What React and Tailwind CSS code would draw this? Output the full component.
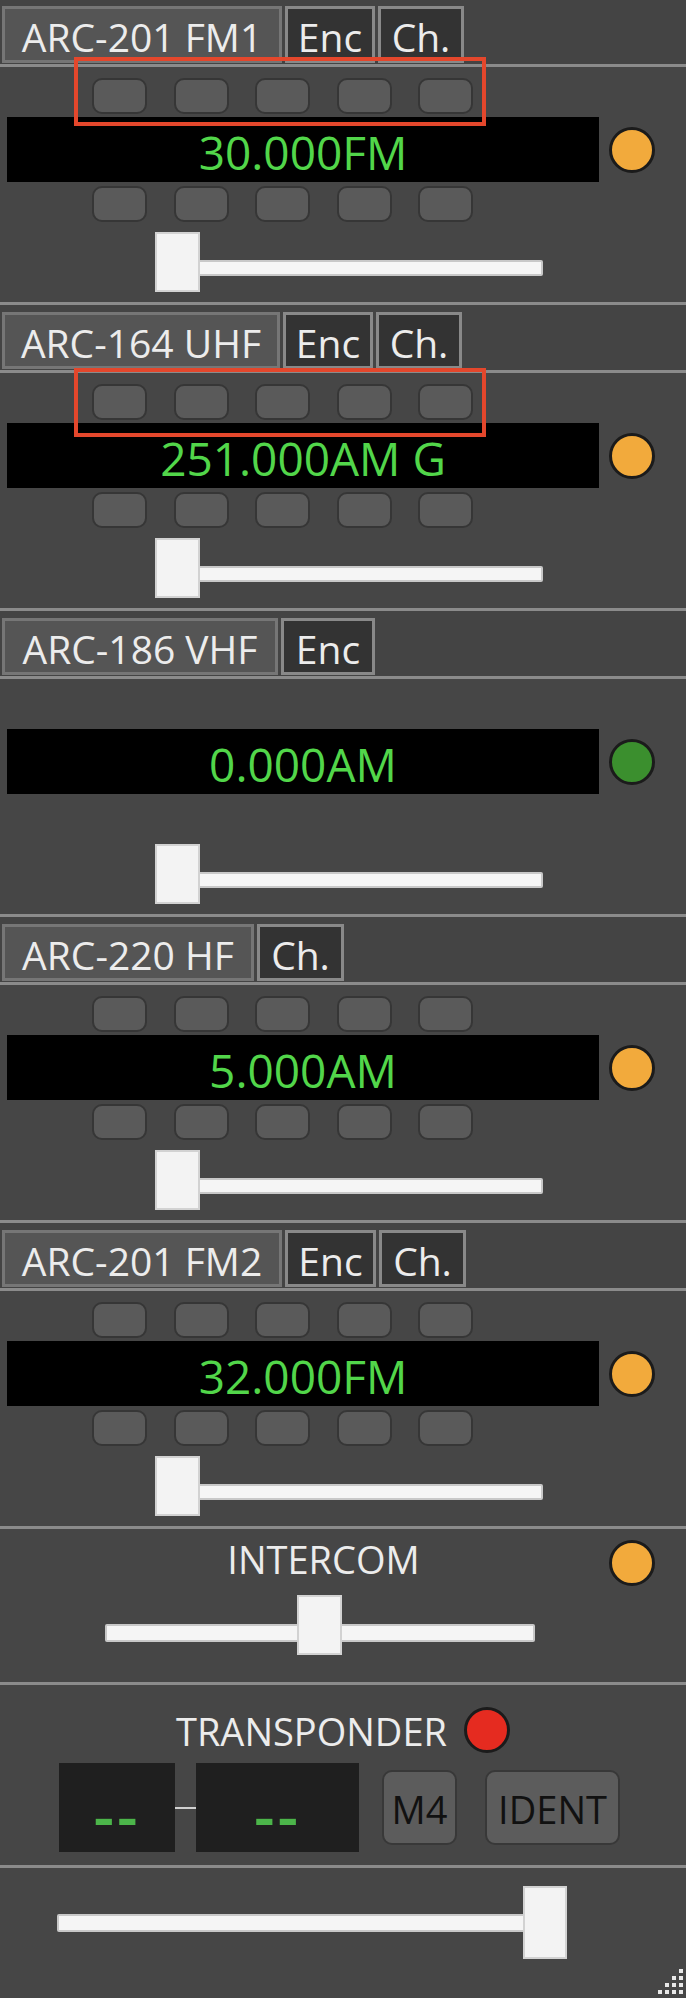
const radios = [
  {
    tabs: [['ARC-201 FM1', 'w-[280px]'], ['Enc', 'w-[90px]'], ['Ch.', 'w-[86px]']],
    freq: '30.000FM',
    led: 'bg-[#f2aa3c]',
    buttons: true,
  },
  {
    tabs: [['ARC-164 UHF', 'w-[278px]'], ['Enc', 'w-[90px]'], ['Ch.', 'w-[86px]']],
    freq: '251.000AM G',
    led: 'bg-[#f2aa3c]',
    buttons: true,
  },
  {
    tabs: [['ARC-186 VHF', 'w-[276px]'], ['Enc', 'w-[94px]']],
    freq: '0.000AM',
    led: 'bg-[#3b8f2e]',
    buttons: false,
  },
  {
    tabs: [['ARC-220 HF', 'w-[252px]'], ['Ch.', 'w-[87px]']],
    freq: '5.000AM',
    led: 'bg-[#f2aa3c]',
    buttons: true,
  },
  {
    tabs: [['ARC-201 FM2', 'w-[280px]'], ['Enc', 'w-[91px]'], ['Ch.', 'w-[87px]']],
    freq: '32.000FM',
    led: 'bg-[#f2aa3c]',
    buttons: true,
  },
]

function Led({ color }) {
  return <div className={`h-[46px] w-[46px] shrink-0 rounded-full border-[3px] border-[#1b1b1b] ${color}`} />
}

function PresetRow({ visible }) {
  return (
    <div className={`flex h-[36px] gap-[26.5px] pl-[92px] ${visible ? '' : 'invisible'}`}>
      {[0, 1, 2, 3, 4].map(i => (
        <div key={i} className="h-[36px] w-[55px] rounded-[10px] border-2 border-[#363636] bg-[#5a5a5a]" />
      ))}
    </div>
  )
}

function Slider({ box, track, thumb }) {
  return (
    <div className={`relative ${box}`}>
      <div className={`absolute left-0 right-0 rounded-[2px] border-2 border-[#c8c8c8] bg-[#f5f5f5] ${track}`} />
      <div className={`absolute top-0 border-2 border-[#d2d2d2] bg-[#f3f3f3] ${thumb}`} />
    </div>
  )
}

function RadioSection({ radio, first }) {
  return (
    <section className={first ? 'pt-[6px]' : 'border-t-[3px] border-[#8b8b8b] pt-[7px]'}>
      <div className="flex h-[58px] items-start gap-[3px] pl-[2px]">
        {radio.tabs.map(([label, w], i) => (
          <div
            key={label}
            className={`flex h-[57px] items-center justify-center border-[3px] pt-[3px] text-[39px] leading-none text-[#ececec] ${w} ${
              i === 0 ? 'border-[#767676] bg-[#555555]' : 'border-[#898989] bg-[#333333]'
            }`}
          >
            {label}
          </div>
        ))}
      </div>
      <div className="h-[238px] border-t-[3px] border-[#8b8b8b] bg-[#464646] pt-[11px]">
        <PresetRow visible={radio.buttons} />
        <div className="mt-[3px] flex items-center gap-[10px] pl-[7px]">
          <div className="flex h-[65px] w-[592px] items-center justify-center bg-black pt-[5px] text-[46px] leading-none text-[#52d64a]">
            {radio.freq}
          </div>
          <Led color={radio.led} />
        </div>
        <div className="mt-[4px]">
          <PresetRow visible={radio.buttons} />
        </div>
        <div className="mt-[10px] pl-[155px]">
          <Slider box="h-[60px] w-[388px]" track="top-[28px] h-[16px]" thumb="left-0 h-[60px] w-[45px]" />
        </div>
      </div>
    </section>
  )
}

function Grip() {
  const dots = []
  for (let r = 0; r < 4; r++) {
    for (let c = 0; c < 4; c++) {
      if (r + c >= 3) dots.push(<rect key={`${r}-${c}`} x={c * 7 + 1} y={r * 7 + 2} width="4" height="4" fill="#e8e8e8" />)
    }
  }
  return (
    <svg width="29" height="30" viewBox="0 0 29 30">
      {dots}
    </svg>
  )
}

export default function App() {
  return (
    <div className="relative h-[1998px] w-[686px] overflow-hidden bg-[#444444] font-['Open_Sans','Noto_Sans',sans-serif] text-[#ececec]">
      {radios.map((r, i) => (
        <RadioSection key={r.tabs[0][0]} radio={r} first={i === 0} />
      ))}

      <section className="h-[156px] border-t-[3px] border-[#8b8b8b] bg-[#464646] pt-[11px]">
        <div className="flex items-start">
          <div className="flex w-[609px] justify-center pl-[38px] text-[38px] leading-none">INTERCOM</div>
          <Led color="bg-[#f2aa3c]" />
        </div>
        <div className="mt-[9px] pl-[105px]">
          <Slider box="h-[60px] w-[430px]" track="top-[29px] h-[18px]" thumb="left-[192px] h-[60px] w-[45px]" />
        </div>
      </section>

      <section className="h-[183px] border-t-[3px] border-[#8b8b8b] bg-[#464646] pt-[22px]">
        <div className="flex items-center justify-center gap-[17px]">
          <span className="pt-[2px] text-[38px] leading-none">TRANSPONDER</span>
          <Led color="bg-[#e52b20]" />
        </div>
        <div className="mt-[10px] flex items-center pl-[59px]">
          <div className="flex h-[89px] w-[116px] items-center justify-center bg-[#1f1f1f] pt-[15px] text-[64px] font-semibold leading-none tracking-[3px] text-[#4cb54a]">
            --
          </div>
          <div className="h-[2px] w-[21px] bg-[#d0d0d0]" />
          <div className="flex h-[89px] w-[163px] items-center justify-center bg-[#1f1f1f] pt-[15px] text-[64px] font-semibold leading-none tracking-[3px] text-[#4cb54a]">
            --
          </div>
          <button className="ml-[23px] flex h-[75px] w-[75px] items-center justify-center rounded-[10px] border-2 border-[#383838] bg-[#5c5c5c] pt-[2px] text-[38px] leading-none text-[#111111]">
            M4
          </button>
          <button className="ml-[28px] flex h-[75px] w-[135px] items-center justify-center rounded-[10px] border-2 border-[#383838] bg-[#5c5c5c] pt-[2px] text-[38px] leading-none text-[#111111]">
            IDENT
          </button>
        </div>
      </section>

      <section className="h-[133px] border-t-[3px] border-[#8b8b8b] bg-[#464646] pt-[18px]">
        <div className="pl-[57px]">
          <Slider box="h-[73px] w-[510px]" track="top-[28px] h-[18px]" thumb="right-0 h-[73px] w-[44px]" />
        </div>
        <div className="mt-[8px] flex justify-end">
          <Grip />
        </div>
      </section>

      <div className="absolute left-[74px] top-[57px] h-[69px] w-[412px] border-4 border-[#e4472c]" />
      <div className="absolute left-[74px] top-[368px] h-[69px] w-[412px] border-4 border-[#e4472c]" />
    </div>
  )
}
